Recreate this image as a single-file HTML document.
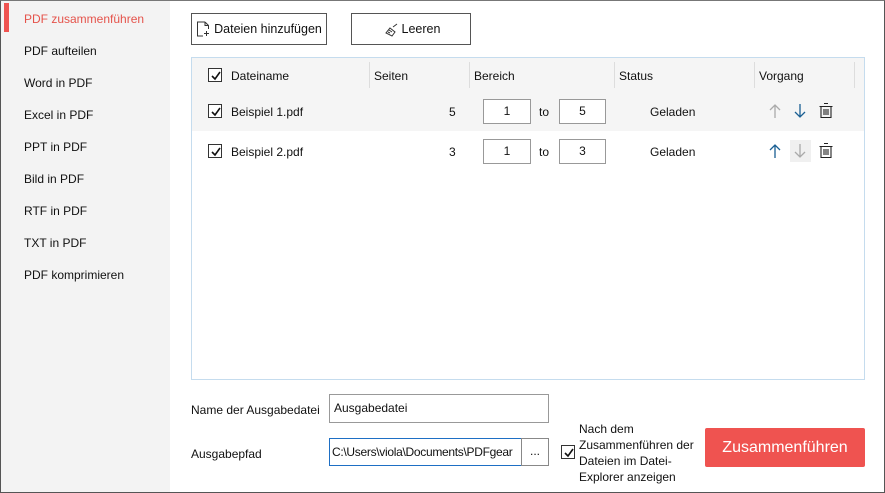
<!DOCTYPE html><html><head><style>
*{margin:0;padding:0;box-sizing:border-box}
body{width:885px;height:493px;overflow:hidden;background:#fff;font-family:"Liberation Sans",sans-serif;font-size:12px;color:#111;position:relative}
.a{position:absolute;white-space:nowrap}
.side{position:absolute;left:0;top:0;width:170px;height:493px;background:#f3f3f3}
.cb{position:absolute;width:14px;height:14px;border:1px solid #333;background:#fff}
.cb svg{position:absolute;left:1px;top:1px}
.inp{position:absolute;border:1px solid #999;background:#fff;height:25px;line-height:23px;padding-left:4px}
.btn{position:absolute;border:1px solid #555;background:#fff;height:32px;line-height:30px;text-align:center;font-size:12.5px}
.sep{position:absolute;top:62px;width:1px;height:26px;background:#ddd}
</style></head><body>
<div class="side"></div>
<div class="a" style="left:4px;top:3px;width:5px;height:29px;background:#ef5350"></div>
<div class="a" style="left:24px;top:12px;color:#e5534b">PDF zusammenführen</div>
<div class="a" style="left:24px;top:44px">PDF aufteilen</div>
<div class="a" style="left:24px;top:76px">Word in PDF</div>
<div class="a" style="left:24px;top:108px">Excel in PDF</div>
<div class="a" style="left:24px;top:140px">PPT in PDF</div>
<div class="a" style="left:24px;top:172px">Bild in PDF</div>
<div class="a" style="left:24px;top:204px">RTF in PDF</div>
<div class="a" style="left:24px;top:236px">TXT in PDF</div>
<div class="a" style="left:24px;top:268px">PDF komprimieren</div>

<div class="btn" style="left:191px;top:13px;width:136px"><svg style="position:absolute;left:4px;top:7px" width="14" height="16" viewBox="0 0 14 16" fill="none" stroke="#333"><path d="M9 1H1.5v14H7M9 1l3.5 3.5V8M9 1v3.5h3.5M10.5 10v5M8 12.5h5"/></svg><span style="padding-left:18px">Dateien hinzufügen</span></div>
<div class="btn" style="left:351px;top:13px;width:120px"><svg style="position:absolute;left:32px;top:9px" width="16" height="14" viewBox="0 0 16 14" fill="none" stroke="#333"><path d="M9 4l4-3M6 5l5 4-3 4-6-3zM4 9l2 1M5 7l3 2"/></svg><span style="padding-left:20px">Leeren</span></div>

<div class="a" style="left:191px;top:57px;width:674px;height:323px;border:1px solid #c5dcee"></div>
<div class="a" style="left:192px;top:58px;width:672px;height:34px;background:#f5f5f5"></div>
<div class="a" style="left:192px;top:92px;width:672px;height:39px;background:#f5f5f5"></div>
<div class="sep" style="left:369px"></div><div class="sep" style="left:469px"></div><div class="sep" style="left:614px"></div><div class="sep" style="left:754px"></div><div class="sep" style="left:854px"></div>

<div class="cb" style="left:208px;top:68px"><svg width="12" height="12"><path d="M2 6l3 3 5-7" stroke="#111" stroke-width="1.6" fill="none"/></svg></div>
<div class="a" style="left:231px;top:69px">Dateiname</div>
<div class="a" style="left:374px;top:69px">Seiten</div>
<div class="a" style="left:474px;top:69px">Bereich</div>
<div class="a" style="left:619px;top:69px">Status</div>
<div class="a" style="left:759px;top:69px">Vorgang</div>

<div class="cb" style="left:208px;top:104px"><svg width="12" height="12"><path d="M2 6l3 3 5-7" stroke="#111" stroke-width="1.6" fill="none"/></svg></div>
<div class="a" style="left:231px;top:105px">Beispiel 1.pdf</div>
<div class="a" style="left:449px;top:105px">5</div>
<div class="inp" style="left:483px;top:99px;width:48px;text-align:center;padding:0">1</div>
<div class="a" style="left:539px;top:105px">to</div>
<div class="inp" style="left:559px;top:99px;width:47px;text-align:center;padding:0">5</div>
<div class="a" style="left:650px;top:105px">Geladen</div>
<svg class="a" style="left:767px;top:103px" width="16" height="16" fill="none" stroke="#aaa" stroke-width="1.3"><path d="M8 15V2M3 7l5-5 5 5"/></svg>
<svg class="a" style="left:792px;top:103px" width="16" height="16" fill="none" stroke="#1a5f93" stroke-width="1.3"><path d="M8 1v13M3 9l5 5 5-5"/></svg>
<svg class="a" style="left:818px;top:102px" width="16" height="17" fill="none" stroke="#222" stroke-width="1.1"><path d="M6 1.5h4M1.5 4.5h13M3 4.5v11h10v-11M6 7v6M8 7v6M10 7v6"/></svg>

<div class="cb" style="left:208px;top:144px"><svg width="12" height="12"><path d="M2 6l3 3 5-7" stroke="#111" stroke-width="1.6" fill="none"/></svg></div>
<div class="a" style="left:231px;top:145px">Beispiel 2.pdf</div>
<div class="a" style="left:449px;top:145px">3</div>
<div class="inp" style="left:483px;top:139px;width:48px;text-align:center;padding:0">1</div>
<div class="a" style="left:539px;top:145px">to</div>
<div class="inp" style="left:559px;top:139px;width:47px;text-align:center;padding:0">3</div>
<div class="a" style="left:650px;top:145px">Geladen</div>
<svg class="a" style="left:767px;top:143px" width="16" height="16" fill="none" stroke="#1a5f93" stroke-width="1.3"><path d="M8 15V2M3 7l5-5 5 5"/></svg>
<div class="a" style="left:790px;top:140px;width:21px;height:22px;background:#f0f0f0"></div>
<svg class="a" style="left:792px;top:143px" width="16" height="16" fill="none" stroke="#aaa" stroke-width="1.3"><path d="M8 1v13M3 9l5 5 5-5"/></svg>
<svg class="a" style="left:818px;top:142px" width="16" height="17" fill="none" stroke="#222" stroke-width="1.1"><path d="M6 1.5h4M1.5 4.5h13M3 4.5v11h10v-11M6 7v6M8 7v6M10 7v6"/></svg>

<div class="a" style="left:191px;top:403px">Name der Ausgabedatei</div>
<div class="inp" style="left:329px;top:394px;width:220px;height:29px;line-height:27px">Ausgabedatei</div>
<div class="a" style="left:191px;top:447px">Ausgabepfad</div>
<div class="inp" style="left:329px;top:438px;width:193px;height:28px;line-height:26px;border-color:#1e6fc4;overflow:hidden;padding-left:2px;letter-spacing:-0.3px">C:\Users\viola\Documents\PDFgear</div>
<div class="inp" style="left:521px;top:438px;width:28px;height:28px;line-height:24px;text-align:center;padding:0;border-color:#888">...</div>
<div class="cb" style="left:561px;top:445px"><svg width="12" height="12"><path d="M2 6l3 3 5-7" stroke="#111" stroke-width="1.6" fill="none"/></svg></div>
<div class="a" style="left:579px;top:421px;line-height:16px;white-space:normal;width:130px">Nach dem<br>Zusammenführen der<br>Dateien im Datei-<br>Explorer anzeigen</div>
<div class="a" style="left:705px;top:428px;width:160px;height:39px;background:#ef5350;border-radius:2px;color:#fff;font-size:16px;line-height:39px;text-align:center">Zusammenführen</div>
<div class="a" style="left:0;top:0;width:885px;height:493px;border:1px solid #555;border-top-color:#777"></div>
</body></html>
